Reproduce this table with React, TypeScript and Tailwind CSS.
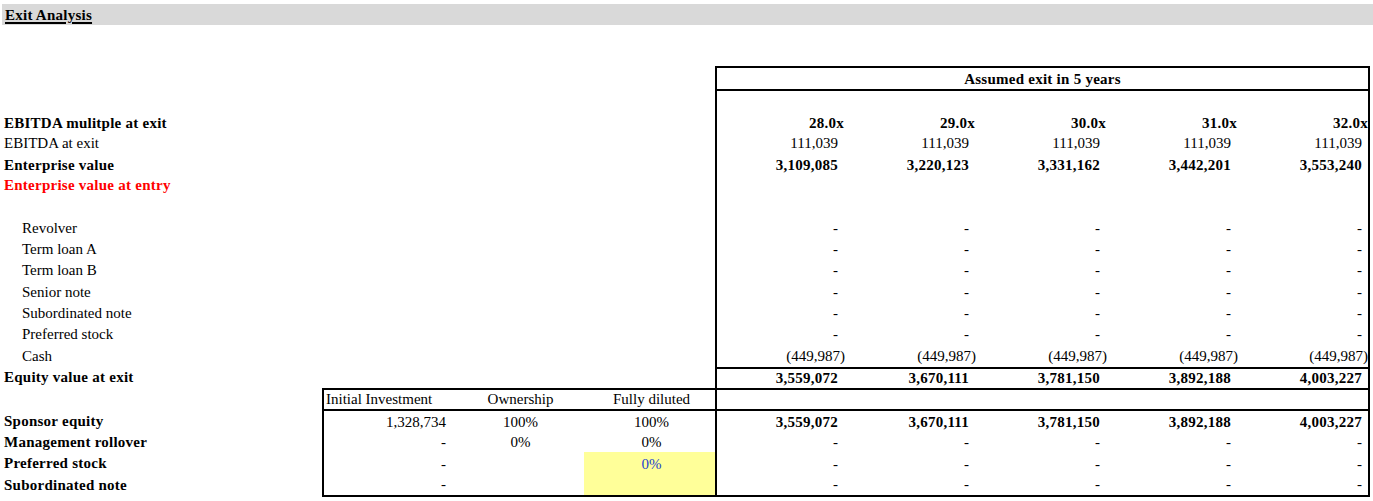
import clsx from "clsx";
import type { ReactNode } from "react";

type Kind = "pos" | "neg" | "mult";

const exitCols = [0, 1, 2, 3, 4];

const rowH = "h-[21.333px]";

function Label({
  children,
  indent,
  bold,
  red,
  className,
}: {
  children?: ReactNode;
  indent?: boolean;
  bold?: boolean;
  red?: boolean;
  className?: string;
}) {
  return (
    <div
      className={clsx(
        "flex w-[322px] shrink-0 items-center whitespace-nowrap",
        indent ? "pl-[22px]" : "pl-[4px]",
        bold && "font-bold tracking-[0.25px]",
        red && "text-[#ff0000]",
        className
      )}
    >
      {children}
    </div>
  );
}

function Gap() {
  return <div className="w-[393px] shrink-0" />;
}

function ExitCells({
  values,
  kind = "pos",
  bold,
  topLine,
  bottomLine,
  className,
}: {
  values?: string[];
  kind?: Kind;
  bold?: boolean;
  topLine?: boolean;
  bottomLine?: boolean;
  className?: string;
}) {
  return (
    <>
      {exitCols.map((i) => {
        const last = i === 4;
        let pad = last ? "pr-[6px]" : "pr-[8px]";
        if (kind === "mult") pad = last ? "pr-0" : "pr-[2px]";
        if (kind === "neg") pad = last ? "pr-0" : "pr-[1px]";
        return (
          <div
            key={i}
            className={clsx(
              "flex w-[131px] shrink-0 items-center justify-end whitespace-nowrap border-black",
              pad,
              i === 0 && "border-l-2",
              last && "border-r-2",
              topLine && "border-t-2",
              bottomLine && "border-b-2",
              bold && "font-bold tracking-[0.25px]",
              className
            )}
          >
            {values?.[i]}
          </div>
        );
      })}
    </>
  );
}

const dashes = ["-", "-", "-", "-", "-"];

const debtRows = [
  "Revolver",
  "Term loan A",
  "Term loan B",
  "Senior note",
  "Subordinated note",
  "Preferred stock",
];

const equity = ["3,559,072", "3,670,111", "3,781,150", "3,892,188", "4,003,227"];

export default function App() {
  return (
    <div className="min-h-screen w-[1373px] bg-white pt-[4px] font-['Liberation_Serif','Times_New_Roman',serif] text-[15px] text-black">
      {/* title bar */}
      <div className={clsx("ml-[2px] flex items-center bg-[#d9d9d9] pl-[3px] pt-[2px]", rowH)}>
        <span className="font-bold tracking-[0.25px] underline decoration-2 underline-offset-2">Exit Analysis</span>
      </div>

      <div className={rowH} />
      <div className={clsx("flex", rowH)}>
        <Label />
        <Gap />
        <div className="w-[655px] shrink-0 border-b-2 border-black" />
      </div>

      {/* header */}
      <div className={clsx("flex", rowH)}>
        <Label />
        <Gap />
        <div className="flex w-[655px] shrink-0 items-center justify-center border-x-2 border-black pt-px font-bold tracking-[0.25px]">
          Assumed exit in 5 years
        </div>
      </div>

      <div className={clsx("flex", rowH)}>
        <Label />
        <Gap />
        <ExitCells topLine />
      </div>

      <div className={clsx("flex", rowH)}>
        <Label bold className="pt-[3px]">
          EBITDA mulitple at exit
        </Label>
        <Gap />
        <ExitCells kind="mult" bold className="pt-[3px]" values={["28.0x", "29.0x", "30.0x", "31.0x", "32.0x"]} />
      </div>
      <div className={clsx("flex", rowH)}>
        <Label className="pt-[2px]">EBITDA at exit</Label>
        <Gap />
        <ExitCells className="pt-[2px]" values={["111,039", "111,039", "111,039", "111,039", "111,039"]} />
      </div>
      <div className={clsx("flex", rowH)}>
        <Label bold className="pt-[2px]">
          Enterprise value
        </Label>
        <Gap />
        <ExitCells bold className="pt-[2px]" values={["3,109,085", "3,220,123", "3,331,162", "3,442,201", "3,553,240"]} />
      </div>
      <div className={clsx("flex", rowH)}>
        <Label bold red>
          Enterprise value at entry
        </Label>
        <Gap />
        <ExitCells />
      </div>
      <div className={clsx("flex", rowH)}>
        <Label />
        <Gap />
        <ExitCells />
      </div>

      {debtRows.map((name) => (
        <div key={name} className={clsx("flex", rowH)}>
          <Label indent>{name}</Label>
          <Gap />
          <ExitCells values={dashes} />
        </div>
      ))}
      <div className={clsx("flex", rowH)}>
        <Label indent>Cash</Label>
        <Gap />
        <ExitCells kind="neg" values={["(449,987)", "(449,987)", "(449,987)", "(449,987)", "(449,987)"]} />
      </div>

      <div className={clsx("flex", rowH)}>
        <Label bold>Equity value at exit</Label>
        <Gap />
        <ExitCells bold topLine values={equity} />
      </div>

      {/* ownership table header */}
      <div className={clsx("flex", rowH)}>
        <Label />
        <div className="flex w-[131px] shrink-0 items-center whitespace-nowrap border-l-2 border-t-2 border-black pl-[2px]">
          Initial Investment
        </div>
        <div className="flex w-[131px] shrink-0 items-center justify-center border-t-2 border-black pl-[4px]">Ownership</div>
        <div className="flex w-[131px] shrink-0 items-center justify-center border-t-2 border-black pl-[4px]">Fully diluted</div>
        <ExitCells topLine />
      </div>

      <div className={clsx("flex", rowH)}>
        <Label bold className="pt-[3px]">
          Sponsor equity
        </Label>
        <div className="flex w-[131px] shrink-0 items-center justify-end border-l-2 border-t-2 border-black pr-[7px] pt-[2px]">1,328,734</div>
        <div className="flex w-[131px] shrink-0 items-center justify-center border-t-2 border-black pl-[4px] pt-[2px]">100%</div>
        <div className="flex w-[131px] shrink-0 items-center justify-center border-t-2 border-black pl-[4px] pt-[2px]">100%</div>
        <ExitCells bold topLine className="pt-[2px]" values={equity} />
      </div>
      <div className={clsx("flex", rowH)}>
        <Label bold className="pt-[2px]">
          Management rollover
        </Label>
        <div className="flex w-[131px] shrink-0 items-center justify-end border-l-2 border-black pr-[7px] pt-[3px]">-</div>
        <div className="flex w-[131px] shrink-0 items-center justify-center pl-[4px] pt-[3px]">0%</div>
        <div className="flex w-[131px] shrink-0 items-center justify-center pl-[4px] pt-[3px]">0%</div>
        <ExitCells className="pt-[3px]" values={dashes} />
      </div>
      <div className={clsx("flex", rowH)}>
        <Label bold className="pt-[2px]">
          Preferred stock
        </Label>
        <div className="flex w-[131px] shrink-0 items-center justify-end border-l-2 border-black pr-[7px] pt-[3px]">-</div>
        <div className="w-[131px] shrink-0" />
        <div className="flex w-[131px] shrink-0 items-center justify-center bg-[#ffff99] pl-[4px] pt-[3px] text-[#1d3fd0]">0%</div>
        <ExitCells className="pt-[3px]" values={dashes} />
      </div>
      <div className="flex h-[23.333px]">
        <Label bold>Subordinated note</Label>
        <div className="flex w-[131px] shrink-0 items-center justify-end border-b-2 border-l-2 border-black pr-[7px]">-</div>
        <div className="w-[131px] shrink-0 border-b-2 border-black" />
        <div className="w-[131px] shrink-0 border-b-2 border-black bg-[#ffff99]" />
        <ExitCells bottomLine values={dashes} />
      </div>
    </div>
  );
}
